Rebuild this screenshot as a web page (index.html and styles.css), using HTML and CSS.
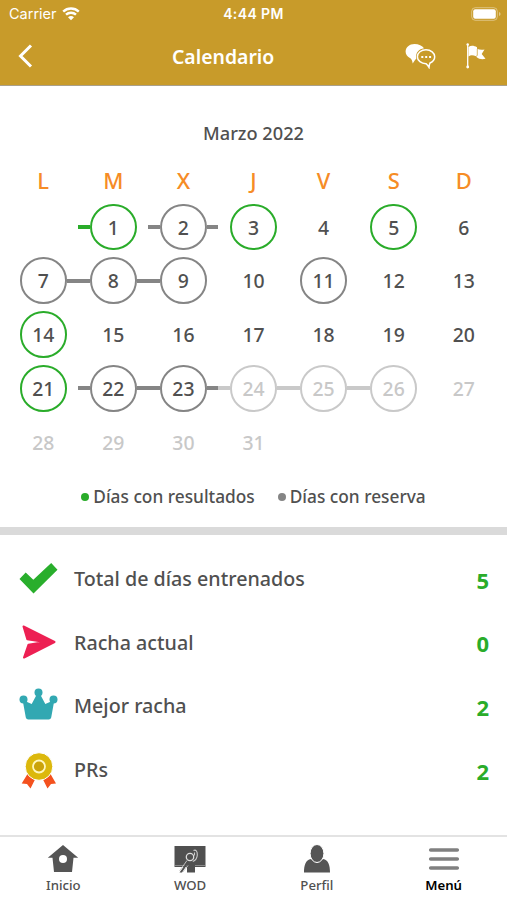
FILE: index.html
```html
<!doctype html>
<html lang="es">
<head>
    <meta charset="utf-8">
    <title>Calendario</title>
    <link rel="stylesheet" href="styles.css">
</head>
<body>
    <header class="header">
        <div class="status-bar">
            <div class="carrier">
                <span>Carrier</span>
                <svg width="18" height="14" viewBox="0 0 18 14">
                    <path d="M1.200 4.600a11.300 11.300 0 0 1 15.600 0M4 7.700a7.200 7.200 0 0 1 10 0" fill="none" stroke="#fff" stroke-width="2.400"/>
                    <path d="M6 10.300a4.400 4.400 0 0 1 6 0l-3 3z" fill="#fff"/>
                </svg>
            </div>
            <span class="time">4:44 PM</span>
            <svg class="battery" width="30" height="14" viewBox="0 0 30 14">
                <rect x=".7" y=".7" width="25.600" height="12.600" rx="3.600" fill="none" stroke="#fff" stroke-opacity=".4"/>
                <rect x="2.200" y="2.200" width="22.600" height="9.600" rx="2" fill="#fff"/>
                <path d="M28 5v4q1.600-.5 1.600-2T28 5z" fill="#fff" fill-opacity=".45"/>
            </svg>
        </div>
        <div class="nav-bar">
            <svg class="back" width="16" height="24" viewBox="0 0 16 24">
                <path d="M14 1.500L3.500 12 14 22.500" fill="none" stroke="#fff" stroke-width="3"/>
            </svg>
            <h1>Calendario</h1>
            <div class="actions">
                <svg width="31" height="26" viewBox="0 0 31 26">
                    <path d="M9.500 1C4.500 1 .6 4.300 .6 8.500c0 2.800 1.600 5.200 4.300 6.500 1.600.9 2.400 2.600 2.800 5.500 1.200-2 2-3.500 3.600-4.800C10.300 9.500 14 6 19 5.300 17.300 2.600 13.700 1 9.500 1z" fill="#fff"/>
                    <path d="M21 6.800c-4.800 0-8.600 3-8.600 6.900 0 4 3.900 7 8.600 7 1.300 1 2.200 2.200 3 3.600.2-1.700.4-3.200 1-4.300 2.900-1.300 4.700-3.600 4.700-6.300 0-3.900-3.900-6.900-8.700-6.900z" fill="none" stroke="#fff" stroke-width="1.500"/>
                    <path d="M16.300 14h2M20.200 14h2M24.100 14h2" stroke="#fff" stroke-width="2"/>
                </svg>
                <svg width="20" height="26" viewBox="0 0 20 26">
                    <path d="M1.700 1v23" stroke="#fff" stroke-width="1.300"/>
                    <circle cx="1.700" cy="1.500" r="1.200" fill="#fff"/>
                    <circle cx="1.700" cy="24" r="1.400" fill="#fff"/>
                    <path d="M2.500 4c3-2 5.800-1 8.500.2v1.600c2.500 1.200 5 1.200 7.500.8l-2.800 4.400 3.800 4.700c-3 1-6.500.5-9-1.700l-.5-.8c-2.500-1-5-1.800-7.500.2z" fill="#fff"/>
                    <path d="M11.300 6v6.500l-1.500 1" fill="none" stroke="#c89b2a" stroke-width=".7"/>
                </svg>
            </div>
        </div>
    </header>

    <section class="calendar">
        <h2>Marzo 2022</h2>
        <div class="grid weekdays">
            <span>L</span><span>M</span><span>X</span><span>J</span><span>V</span><span>S</span><span>D</span>
        </div>
        <div class="grid days">
            <div class="day"></div>
            <div class="day result left"><span>1</span></div>
            <div class="day booked left right"><span>2</span></div>
            <div class="day result"><span>3</span></div>
            <div class="day"><span>4</span></div>
            <div class="day result"><span>5</span></div>
            <div class="day"><span>6</span></div>

            <div class="day booked right"><span>7</span></div>
            <div class="day booked left right"><span>8</span></div>
            <div class="day booked left"><span>9</span></div>
            <div class="day"><span>10</span></div>
            <div class="day booked"><span>11</span></div>
            <div class="day"><span>12</span></div>
            <div class="day"><span>13</span></div>

            <div class="day result"><span>14</span></div>
            <div class="day"><span>15</span></div>
            <div class="day"><span>16</span></div>
            <div class="day"><span>17</span></div>
            <div class="day"><span>18</span></div>
            <div class="day"><span>19</span></div>
            <div class="day"><span>20</span></div>

            <div class="day result"><span>21</span></div>
            <div class="day booked left right"><span>22</span></div>
            <div class="day booked left right"><span>23</span></div>
            <div class="day booked future left right"><span>24</span></div>
            <div class="day booked future left right"><span>25</span></div>
            <div class="day booked future left"><span>26</span></div>
            <div class="day future"><span>27</span></div>

            <div class="day future"><span>28</span></div>
            <div class="day future"><span>29</span></div>
            <div class="day future"><span>30</span></div>
            <div class="day future"><span>31</span></div>
        </div>
        <div class="legend">
            <span class="legend-item legend-result">Días con resultados</span>
            <span class="legend-item legend-booked">Días con reserva</span>
        </div>
    </section>

    <section class="stats">
        <div class="stat">
            <svg width="40" height="40" viewBox="0 0 40 40">
                <path d="M.5 20L6.700 13.500l7.600 7.300L32.200 4l6.300 6.700L14.500 34.500z" fill="#29ae2c"/>
            </svg>
            <span class="stat-name">Total de días entrenados</span>
            <span class="stat-value">5</span>
        </div>
        <div class="stat">
            <svg width="40" height="40" viewBox="0 0 40 40">
                <path d="M4.500 4.500L35.500 20 5 35.500 9.500 22.700 26 20 8.300 17.200z" fill="#ed2053" stroke="#ed2053" stroke-width="2" stroke-linejoin="round"/>
            </svg>
            <span class="stat-name">Racha actual</span>
            <span class="stat-value">0</span>
        </div>
        <div class="stat">
            <svg width="40" height="40" viewBox="0 0 40 40">
                <g fill="#32a8b2">
                    <circle cx="4.500" cy="13.500" r="4"/>
                    <circle cx="19.500" cy="6.500" r="4"/>
                    <circle cx="34.500" cy="13.500" r="4"/>
                    <path d="M3.800 15l3.200.5 5.700 2.500L18 8h3l5.300 10 5.700-2.500 3.200-.5-3 16.500q-.5 2-2.500 2H9.300q-2 0-2.500-2z"/>
                </g>
            </svg>
            <span class="stat-name">Mejor racha</span>
            <span class="stat-value">2</span>
        </div>
        <div class="stat">
            <svg width="40" height="40" viewBox="0 0 40 40">
                <path d="M8.500 24L2.700 33.500l5.300.4 3.500 4.500 5.500-11zM31.500 24l5.500 9.500-5 .4-3.500 4.500-5.500-11z" fill="#f4511e"/>
                <circle cx="20" cy="16.500" r="13.800" fill="#dcb80c" stroke="#fff"/>
                <circle cx="20" cy="16.500" r="6" fill="#cba30a" stroke="#fff7bd" stroke-width="1.800"/>
            </svg>
            <span class="stat-name">PRs</span>
            <span class="stat-value">2</span>
        </div>
    </section>

    <nav class="tab-bar">
        <a class="tab">
            <svg width="32" height="30" viewBox="0 0 32 30">
                <path d="M16 1L.8 13.800h4.700L7 28h18l1.500-14.200h4.700z" fill="#555"/>
                <circle cx="16" cy="15" r="4" fill="#fff"/>
            </svg>
            <span>Inicio</span>
        </a>
        <a class="tab">
            <svg width="32" height="30" viewBox="0 0 32 30">
                <path d="M.5 2h31v21H.5z" fill="#505050"/>
                <path d="M1 21.500h30" stroke="#999" stroke-width=".8"/>
                <!-- coach in front of the board -->
                <path d="M5.500 28.500L13 18l8-3v13.500h-8V21l-5 7.500z" fill="#505050"/>
                <path d="M5.500 27l7.500-10.500M9 28l5-6.500" fill="none" stroke="#ccc" stroke-width=".9"/>
                <path d="M19.500 6.500c2.500-1.200 4 1 3.800 4.500-.2 3-1.800 5.500-4.500 6.500M20.500 8.500v3" fill="none" stroke="#ccc" stroke-width="1.100"/>
                <circle cx="16" cy="13" r="3.700" fill="#505050" stroke="#ddd" stroke-width="1.300"/>
            </svg>
            <span>WOD</span>
        </a>
        <a class="tab">
            <svg width="32" height="30" viewBox="0 0 32 30">
                <path d="M3 28.500c0-7 1.500-12.500 7-13.500l6 4 6-4c5.500 1 7 6.500 7 13.500z" fill="#555"/>
                <ellipse cx="16" cy="9.500" rx="6.900" ry="9" fill="#555" stroke="#fff"/>
            </svg>
            <span>Perfil</span>
        </a>
        <a class="tab active">
            <svg width="32" height="30" viewBox="0 0 32 30">
                <path d="M2.700 6h26.600M2.700 15h26.600M2.700 24h26.600" stroke="#808080" stroke-width="3.600" stroke-linecap="round"/>
            </svg>
            <span>Menú</span>
        </a>
    </nav>
</body>
</html>
```
FILE: styles.css
```css
* {
    box-sizing: border-box;
}

body {
    margin: 0;
    height: 900px;
    display: flex;
    flex-direction: column;
    overflow: hidden;
    background-color: #fff;
    color: #505050;
    font-family: "Noto Sans", sans-serif;
}

svg {
    display: block;
    flex: none;
}

/* Header */
.header {
    height: 86px;
    background-color: #c89b2a;
    border-bottom: 1px solid #aaa08a;
    color: #fff;
}

.status-bar {
    height: 27px;
    padding: 0 6px 0 9px;
    display: grid;
    grid-template-columns: 1fr auto 1fr;
    align-items: center;
    font: 14.5px Inter, sans-serif;
}

.carrier {
    display: flex;
    align-items: center;
    gap: 5px;
}

.time {
    margin-right: 3px;
    font-weight: 600;
    font-size: 14px;
    letter-spacing: 0.4px;
}

.battery {
    justify-self: end;
}

.nav-bar {
    height: 58px;
    padding: 0 21px 0 17px;
    display: flex;
    align-items: center;
}

h1 {
    flex: 1;
    margin: 0 0 0 139px;
    font-size: 19.4px;
    font-weight: 600;
}

.actions {
    display: flex;
    gap: 30px;
}

/* Calendar */
.calendar {
    height: 449px;
    padding: 34px 8px 0;
    border-bottom: 8px solid #dadada;
}

h2 {
    margin: 0;
    font-size: 18.2px;
    font-weight: 500;
    line-height: 26px;
    text-align: center;
}

.grid {
    display: grid;
    grid-template-columns: repeat(7, 70.1px);
    justify-content: center;
    text-align: center;
}

.weekdays {
    margin-top: 18px;
    color: #f68c26;
    font-size: 22px;
    font-weight: 500;
    line-height: 32px;
}

.days {
    margin-top: 4px;
    grid-auto-rows: 53.8px;
    font-size: 19.4px;
    font-weight: 500;
}

.day {
    display: flex;
    align-items: center;
    justify-content: center;
    color: #505050;
    --line: #858585;
}

.day span {
    flex: none;
    width: 46.6px;
    height: 46.6px;
    line-height: 43px;
    border: 2px solid transparent;
    border-radius: 50%;
}

.result {
    --line: #2aac2a;
}

.day.future {
    color: #c8c8c8;
    --line: #c9c9c9;
}

.result span,
.booked span {
    border-color: var(--line);
}

/* streak lines between circles */
.day::before,
.day::after {
    content: "";
    flex: 1;
    height: 4px;
}

.left::before,
.right::after {
    background-color: var(--line);
}

.legend {
    margin-top: 16px;
    display: flex;
    justify-content: center;
    gap: 23px;
    font-size: 17.3px;
    font-weight: 500;
    line-height: 24px;
}

.legend-item {
    display: flex;
    align-items: center;
    gap: 4px;
}

.legend-item::before {
    content: "";
    width: 8px;
    height: 8px;
    border-radius: 50%;
    background-color: #858585;
}

.legend-item.legend-result::before {
    background-color: #2aac2a;
}

/* Stats */
.stats {
    flex: 1;
    padding: 12px 18px 0 19px;
}

.stat {
    height: 63.6px;
    display: flex;
    align-items: center;
    gap: 15px;
    font-size: 19.7px;
    font-weight: 500;
}

.stat-name {
    flex: 1;
}

.stat-value {
    padding-top: 2px;
    color: #2aac2a;
    font-size: 22px;
    font-weight: 700;
}

/* Bottom tabs */
.tab-bar {
    height: 65px;
    padding-top: 7px;
    display: grid;
    grid-template-columns: repeat(4, 1fr);
    border-top: 2px solid #e3e3e3;
}

.tab {
    display: flex;
    flex-direction: column;
    align-items: center;
    font-size: 13.2px;
    font-weight: 500;
    line-height: 22px;
}

.active {
    color: #000;
    font-weight: 600;
}
```
